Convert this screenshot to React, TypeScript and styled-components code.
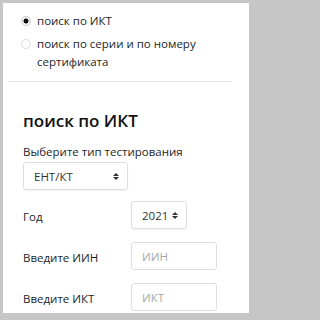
import styled, { createGlobalStyle } from 'styled-components';

const GlobalStyle = createGlobalStyle`
  html, body {
    margin: 0;
    padding: 0;
    background: #c6c6c6;
  }
  body {
    font-family: "Open Sans", "Noto Sans", sans-serif;
    color: #212529;
  }
`;

const Frame = styled.div`
  box-sizing: border-box;
  width: 254px;
  height: 320px;
  padding: 3px 5px 7px 3px;
  background: #c6c6c6;
`;

const Card = styled.div`
  height: 100%;
  background: #ffffff;
  overflow: hidden;
`;

const RadioGroup = styled.div`
  display: flex;
  flex-direction: column;
  gap: 5px;
  padding: 9px 10px 0 18px;
`;

const RadioRow = styled.label`
  display: flex;
  align-items: flex-start;
  gap: 6px;
  font-size: 11.5px;
  line-height: 18px;
`;

const RadioDot = styled.span<{ checked?: boolean }>`
  flex: none;
  box-sizing: border-box;
  width: 10px;
  height: 10px;
  margin-top: 4px;
  border-radius: 50%;
  border: 1px solid ${({ checked }) => (checked ? '#cfcfcf' : '#dcdcdc')};
  background: ${({ checked }) =>
    checked ? 'radial-gradient(circle, #111 0 2.2px, #f4f4f4 2.8px)' : '#fff'};
`;

const Divider = styled.hr`
  margin: 10px 17px 0 5px;
  border: 0;
  border-top: 1px solid #e4e4e4;
`;

const Section = styled.div`
  padding: 28px 10px 0 20px;
`;

const Heading = styled.h2`
  margin: 0;
  font-size: 17px;
  font-weight: 600;
  line-height: 22px;
  color: #111;
`;

const Caption = styled.div`
  margin-top: 12px;
  font-size: 11.5px;
  line-height: 16px;
`;

const SelectBox = styled.div<{ w: number }>`
  box-sizing: border-box;
  display: flex;
  align-items: center;
  justify-content: space-between;
  width: ${({ w }) => w}px;
  height: 28px;
  padding: 0 8px 0 10px;
  border: 1px solid #dedede;
  border-radius: 3px;
  box-shadow: 0 1px 2px rgba(0, 0, 0, 0.06);
  font-size: 11.5px;
  color: #333;
`;

const TypeSelectWrap = styled.div`
  margin-top: 2px;
`;

const Arrows = styled.span`
  display: flex;
  flex-direction: column;
  gap: 1px;
  align-items: center;
`;

const Tri = styled.span<{ up?: boolean }>`
  width: 0;
  height: 0;
  border-left: 3px solid transparent;
  border-right: 3px solid transparent;
  ${({ up }) => (up ? 'border-bottom: 3px solid #333;' : 'border-top: 3px solid #333;')}
`;

const FieldGrid = styled.div`
  display: grid;
  grid-template-columns: 108px auto;
  grid-auto-rows: 28px;
  row-gap: 13px;
  align-items: center;
  margin-top: 11px;
`;

const FieldLabel = styled.div`
  font-size: 11.5px;
  padding-top: 3px;
`;

const TextInput = styled.input`
  box-sizing: border-box;
  width: 86px;
  height: 28px;
  padding: 0 10px;
  border: 1px solid #dedede;
  border-radius: 3px;
  font-family: inherit;
  font-size: 11.5px;
  color: #333;
  outline: none;
  &::placeholder {
    color: #a8a8a8;
  }
`;

const Select = ({ value, width }: { value: string; width: number }) => (
  <SelectBox w={width}>
    <span>{value}</span>
    <Arrows>
      <Tri up />
      <Tri />
    </Arrows>
  </SelectBox>
);

const App = () => {
  return (
    <>
      <GlobalStyle />
      <Frame>
        <Card>
          <RadioGroup>
            <RadioRow>
              <RadioDot checked />
              <span>поиск по ИКТ</span>
            </RadioRow>
            <RadioRow>
              <RadioDot />
              <span>
                поиск по серии и по номеру
                <br />
                сертификата
              </span>
            </RadioRow>
          </RadioGroup>
          <Divider />
          <Section>
            <Heading>поиск по ИКТ</Heading>
            <Caption>Выберите тип тестирования</Caption>
            <TypeSelectWrap>
              <Select value="ЕНТ/КТ" width={105} />
            </TypeSelectWrap>
            <FieldGrid>
              <FieldLabel>Год</FieldLabel>
              <Select value="2021" width={56} />
              <FieldLabel>Введите ИИН</FieldLabel>
              <TextInput placeholder="ИИН" />
              <FieldLabel>Введите ИКТ</FieldLabel>
              <TextInput placeholder="ИКТ" />
            </FieldGrid>
          </Section>
        </Card>
      </Frame>
    </>
  );
};

export default App;
